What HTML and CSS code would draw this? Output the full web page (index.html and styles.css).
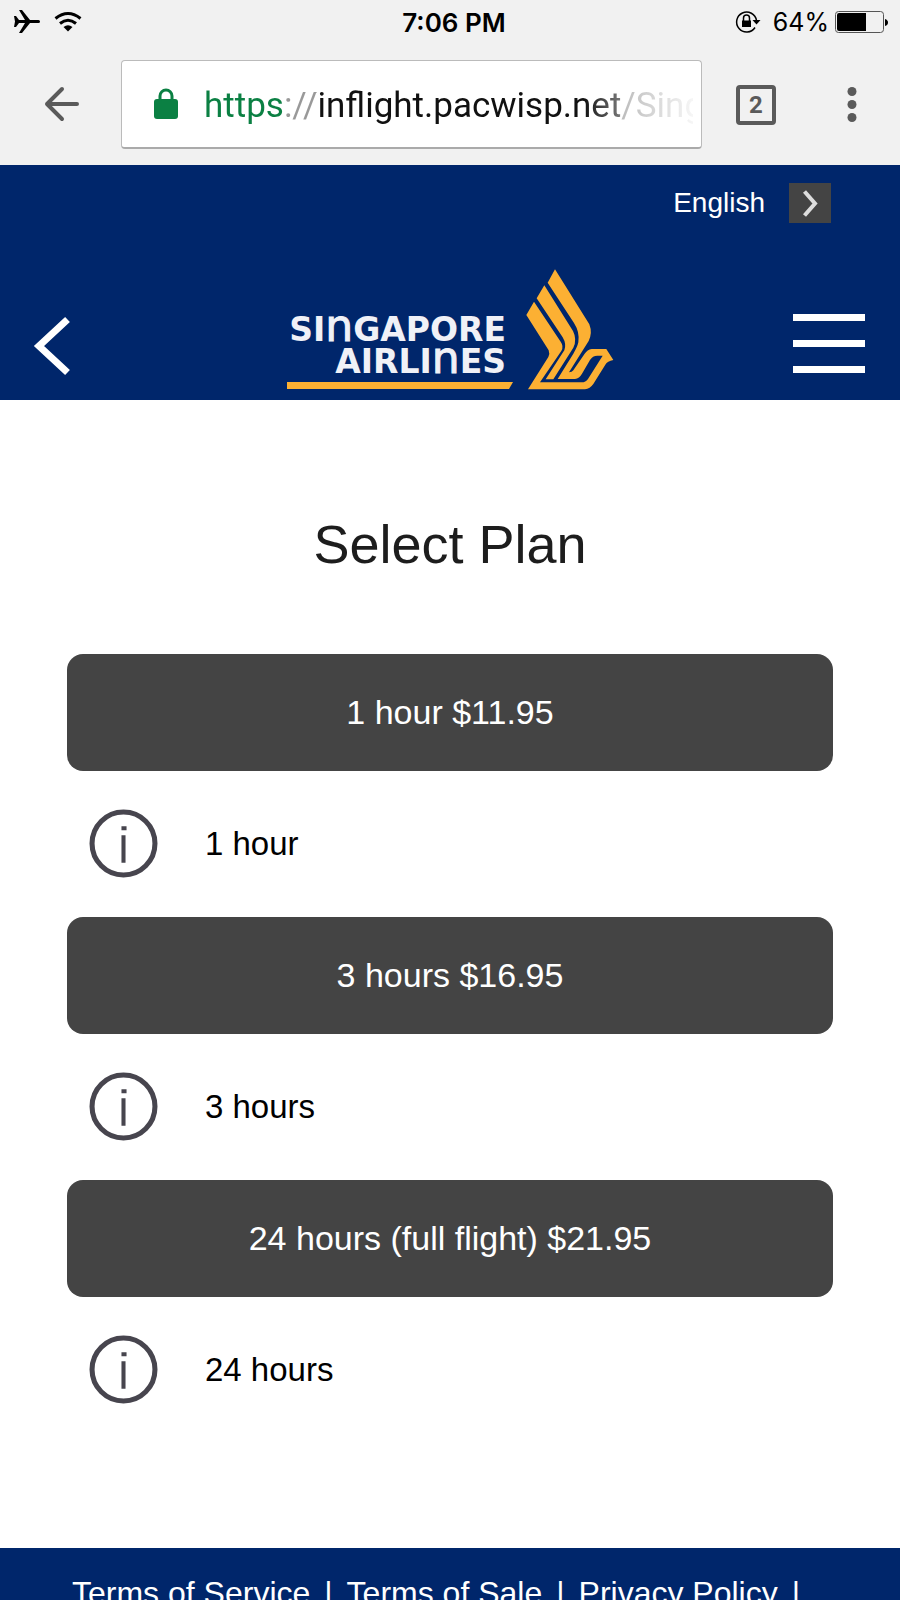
FILE: index.html
```html
<!DOCTYPE html>
<html lang="en">
<head>
<meta charset="utf-8">
<meta name="viewport" content="width=device-width, initial-scale=1">
<title>Select Plan</title>
<link rel="stylesheet" href="styles.css">
</head>
<body>
<div class="browser">
  <div class="status">
    <div class="status-side">
      <svg width="28" height="26" viewBox="0 0 28 26" aria-hidden="true"><path d="M2 7h2l3 4h6L7 1h3l8 10h8.500q1.500 0 1.500 1.500t-1.500 1.500H18l-8 10H7l6-10H7l-3 4H2l1-5.500z"/></svg>
      <svg width="28" height="22" viewBox="0 0 28 22" fill="none" stroke="#000" stroke-width="3" aria-hidden="true"><path d="M1.500 7.500q12.500-10 25 0M6 12.500q8-6.500 16 0"/><path d="M9.500 16q4.500-3.500 9 0L14 20.500z" fill="#000" stroke="none"/></svg>
    </div>
    <time class="clock">7:06 PM</time>
    <div class="status-side status-end">
      <svg class="rotation" width="26" height="24" viewBox="0 0 26 24" fill="none" stroke="#000" stroke-width="1.500" aria-hidden="true"><path d="M21.500 10.500A10 10 0 1 0 20 17.500"/><path d="M17.500 10h8L21.500 14.500z" fill="#000" stroke="none"/><rect x="7" y="10.500" width="9" height="6.500" fill="#000" stroke="none"/><path d="M8.500 11V8a3 3 0 0 1 6 0v3"/></svg>
      <span class="percent">64%</span>
      <svg width="53" height="22" viewBox="0 0 53 22" aria-hidden="true"><rect x=".5" y=".5" width="48" height="21" rx="3" fill="none" stroke="#555"/><path d="M4 2h27v18H4q-2 0-2-2V4q0-2 2-2zM50 8q3 1 3 3.500T50 15z"/></svg>
    </div>
  </div>
  <div class="toolbar">
    <button class="icon-button" aria-label="Back"><svg width="36" height="36" viewBox="0 0 36 36" fill="none" stroke="#5a5a5a" stroke-width="4" stroke-linecap="round" stroke-linejoin="round"><path d="M18 2L3 17l15 15M3 17h30"/></svg></button>
    <label class="address">
      <svg width="24" height="31" viewBox="0 0 24 31" aria-hidden="true"><rect y="10" width="24" height="20" rx="3" fill="#0b8043"/><path d="M6 12V7a6 6 0 0 1 12 0v5" fill="none" stroke="#0b8043" stroke-width="3"/></svg>
      <input class="url" type="text" aria-label="Address" value="https://inflight.pacwisp.net/Sing">
    </label>
    <button class="tabs" aria-label="Open tabs">2</button>
    <button class="icon-button" aria-label="More"><svg width="10" height="36" viewBox="0 0 10 36" fill="#5a5a5a"><circle cx="5" cy="4.500" r="4.500"/><circle cx="5" cy="17.500" r="4.500"/><circle cx="5" cy="30.500" r="4.500"/></svg></button>
  </div>
</div>
<header class="header">
  <div class="language">
    <span>English</span>
    <button class="language-next" aria-label="Change language"><svg width="14" height="28" viewBox="0 0 14 28" fill="none" stroke="#ddd" stroke-width="4"><path d="M1.500 2.500L12 14.500 1.500 26.500"/></svg></button>
  </div>
  <div class="nav">
    <button class="icon-button" aria-label="Previous page"><svg width="36" height="60" viewBox="0 0 36 60" fill="none" stroke="#fff" stroke-width="7"><path d="M33.500 3.500L5 30l28.500 26.500"/></svg></button>
    <a class="logo" href="#" aria-label="Singapore Airlines">
      <svg width="326" height="120" viewBox="0 0 326 120">
        <g class="wordmark"><text x="219" y="71">SI<tspan class="tall-n">n</tspan>GAPORE</text><text x="219" y="103">AIRLI<tspan class="tall-n">n</tspan>ES</text></g>
        <g fill="#fcb033">
          <path d="M0 112h226l-4 7H0z"/>
          <g transform="translate(213 -15) scale(.3333)">
            <path d="M165 43L143 83L222 204Q240 232 235 262Q232 276 220 296L173 372H225Q238 370 246 356L270 315Q278 302 292 302H308L264 372Q257 382 245 382H120L184 288Q192 274 182 260L102 140L79 180L146 286Q150 296 145 306L84 403H255Q270 401 280 387L316 329Q322 318 340 315L319 282H275Q262 284 254 296L220 346Q216 352 207 352L266 258Q278 234 268 208Z"/>
            <path d="M133 91L110 130L188 247Q200 267 193 286L137 373H160L220 278Q232 254 219 228Z"/>
          </g>
        </g>
      </svg>
    </a>
    <button class="icon-button" aria-label="Menu"><svg width="72" height="60" viewBox="0 0 72 60" fill="#fff"><path d="M-1-2h72v7H-1zM-1 24h72v7H-1zM-1 50h72v7H-1z"/></svg></button>
  </div>
</header>
<main class="main">
  <h1 class="title">Select Plan</h1>
  <button class="plan">1 hour $11.95</button>
  <div class="detail"><svg class="info" viewBox="0 0 68 68" aria-hidden="true"><circle cx="34" cy="33" r="31" fill="none" stroke="#47454e" stroke-width="5"/><path d="M32 16h5v4h-5zM32 25h4v27h-4z" fill="#47454e"/></svg><span>1 hour</span></div>
  <button class="plan">3 hours $16.95</button>
  <div class="detail"><svg class="info" viewBox="0 0 68 68" aria-hidden="true"><circle cx="34" cy="33" r="31" fill="none" stroke="#47454e" stroke-width="5"/><path d="M32 16h5v4h-5zM32 25h4v27h-4z" fill="#47454e"/></svg><span>3 hours</span></div>
  <button class="plan">24 hours (full flight) $21.95</button>
  <div class="detail"><svg class="info" viewBox="0 0 68 68" aria-hidden="true"><circle cx="34" cy="33" r="31" fill="none" stroke="#47454e" stroke-width="5"/><path d="M32 16h5v4h-5zM32 25h4v27h-4z" fill="#47454e"/></svg><span>24 hours</span></div>
</main>
<footer class="footer">
  <a href="#">Terms of Service</a><span class="divider">|</span><a href="#">Terms of Sale</a><span class="divider">|</span><a href="#">Privacy Policy</a><span class="divider">|</span>
</footer>
</body>
</html>
```
FILE: styles.css
```css
* { box-sizing: border-box; }

body {
  margin: 0;
  height: 100vh;
  overflow: hidden;
  background: #fff;
  color: #000;
  font-family: "Liberation Sans", Arial, sans-serif;
}

svg { display: block; flex: none; overflow: visible; }

button {
  margin: 0;
  padding: 0;
  border: 0;
  background: none;
  font: inherit;
}

a { color: inherit; text-decoration: none; }

.browser { background: #f1f1f1; }

.status {
  display: flex;
  align-items: center;
  height: 44px;
  padding: 0 12px;
  font-family: Inter, sans-serif;
  font-size: 26px;
}

.status-side {
  display: flex;
  flex: 1;
  align-items: center;
  gap: 14px;
}

.status-end { justify-content: flex-end; gap: 6px; }
.rotation { margin-right: 6px; }
.percent { font-size: 25px; }
.clock { margin-left: 8px; font-weight: 600; }

.toolbar {
  display: flex;
  align-items: center;
  height: 121px;
  padding: 0 43px 0 44px;
}

.icon-button { display: block; flex: none; }

.address {
  display: flex;
  flex: 1;
  align-items: center;
  gap: 26px;
  min-width: 0;
  height: 89px;
  margin: 0 34px 0 41px;
  padding: 0 8px 0 32px;
  border: 1px solid #bbb;
  border-bottom: 2px solid #aaa;
  border-radius: 4px;
  background: #fff;
}

.url {
  flex: 1;
  min-width: 0;
  padding: 4px 0 0;
  border: 0;
  outline: 0;
  font-family: Roboto, sans-serif;
  font-size: 35px;
  line-height: 48px;
  color: transparent;
  background: linear-gradient(90deg, #0b8043 79px, #999 79px 112px, #111 112px 380px, #777 416px, #bbb 416px, #fff 500px);
  -webkit-background-clip: text;
  background-clip: text;
}

.tabs {
  flex: none;
  width: 40px;
  height: 40px;
  margin-right: 71px;
  border: 4px solid #5a5a5a;
  border-radius: 4px;
  color: #5a5a5a;
  font-family: Roboto, sans-serif;
  font-size: 24px;
  font-weight: 700;
  line-height: 32px;
}

.header {
  height: 235px;
  background: #00266b;
  color: #fff;
}

.language {
  display: flex;
  align-items: center;
  justify-content: flex-end;
  gap: 24px;
  padding: 18px 69px 0 0;
  font-size: 28px;
}

.language-next {
  display: flex;
  align-items: center;
  justify-content: center;
  width: 42px;
  height: 40px;
  background: #444;
}

.nav {
  display: flex;
  align-items: flex-end;
  justify-content: space-between;
  padding: 47px 34px 0;
}

.nav .icon-button { padding-bottom: 14px; }
.logo { margin-left: 36px; }

.wordmark {
  fill: #f0f1f7;
  font-family: "DejaVu Sans", sans-serif;
  font-size: 33px;
  font-weight: 700;
  text-anchor: end;
}

.tall-n {
  font-size: 44px;
  font-weight: 400;
  stroke: #f0f1f7;
  stroke-width: 1px;
}

.main { padding: 110px 67px 105px; }

.title {
  margin: 0 0 76px;
  color: #1d1d1d;
  font-size: 54px;
  font-weight: 400;
  line-height: 68px;
  text-align: center;
}

.plan {
  display: block;
  width: 100%;
  height: 117px;
  border-radius: 16px;
  background: #444;
  color: #fff;
  font-size: 34px;
}

.detail {
  display: flex;
  align-items: center;
  gap: 47px;
  height: 146px;
  padding-left: 22px;
  font-size: 33px;
}

.info { width: 69px; height: 69px; }

.footer {
  min-height: 160px;
  padding: 24px 72px;
  background: #00266b;
  color: #fff;
  font-size: 32px;
  line-height: 42px;
}

.divider { margin: 0 14px; }
```
